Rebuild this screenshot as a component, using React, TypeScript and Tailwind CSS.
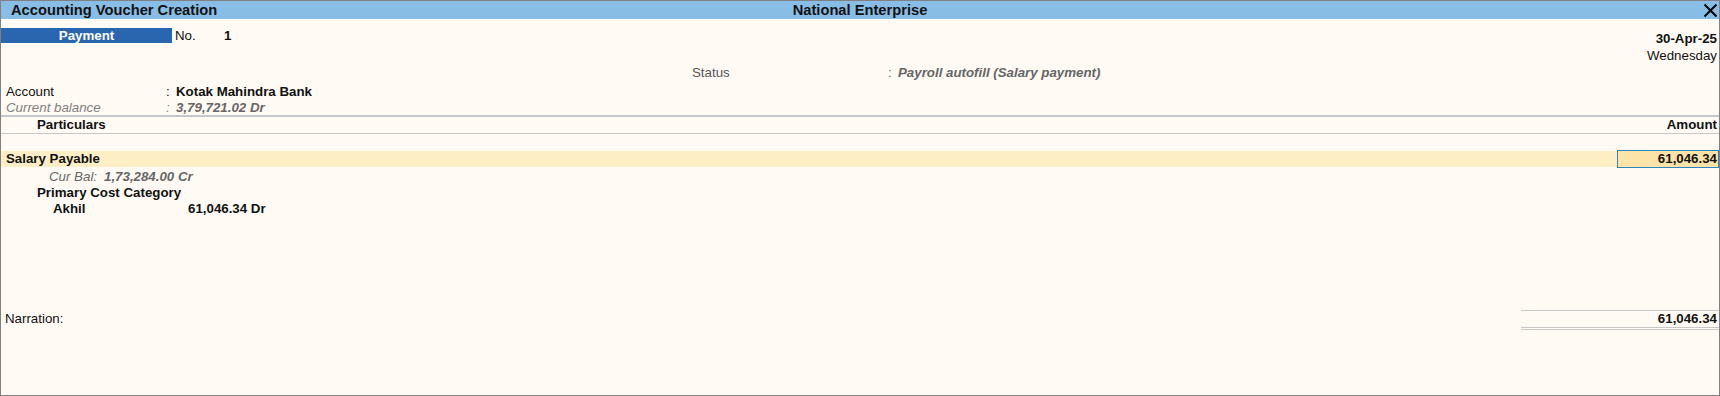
import React from 'react';

const font = { fontFamily: '"Liberation Sans", Arial, sans-serif' };

const App: React.FC = () => {
  return (
    <div
      className="w-[1720px] h-[396px] bg-[#fffaf3] border border-[#808080] flex flex-col text-[13.3px] text-[#111]"
      style={font}
    >
      {/* Title bar */}
      <div className="h-[18px] bg-[#88bde6] grid grid-cols-[1fr_auto_1fr] items-center font-bold text-[14.7px] leading-[18px]">
        <div className="pl-[10px]">Accounting Voucher Creation</div>
        <div>National Enterprise</div>
        <div className="flex justify-end pr-[1px]">
          <svg width="15" height="15" viewBox="0 0 15 15" className="block">
            <path d="M1.5 1.5 L13.5 13.5 M13.5 1.5 L1.5 13.5" stroke="#000" strokeWidth="2" />
          </svg>
        </div>
      </div>

      {/* Voucher type, number and date */}
      <div className="flex mt-[9px]">
        <div className="flex h-[15px] items-center">
          <div className="w-[171px] h-[15px] bg-[#2a66b0] text-white font-bold text-center leading-[15px]">
            Payment
          </div>
          <div className="w-[52px] pl-[3px]">No.</div>
          <div className="font-bold">1</div>
        </div>
        <div className="ml-auto mt-[2px] pr-[2px] flex flex-col items-end leading-[17px]">
          <div className="font-bold">30-Apr-25</div>
          <div>Wednesday</div>
        </div>
      </div>

      {/* Status */}
      <div className="flex h-[17px] items-center">
        <div className="w-[691px]" />
        <div className="w-[196px] text-[#555]">Status</div>
        <div className="w-[10px] text-[#777]">:</div>
        <div className="font-bold italic text-[#666]">Payroll autofill (Salary payment)</div>
      </div>

      {/* Account */}
      <div className="mt-[3px] flex h-[16px] items-center pl-[5px]">
        <div className="w-[160px]">Account</div>
        <div className="w-[10px]">:</div>
        <div className="font-bold">Kotak Mahindra Bank</div>
      </div>
      <div className="flex h-[15px] items-center pl-[5px] italic text-[#808080]">
        <div className="w-[160px]">Current balance</div>
        <div className="w-[10px]">:</div>
        <div className="font-bold text-[#666]">3,79,721.02 Dr</div>
      </div>

      {/* Column headers */}
      <div className="border-t-2 border-b border-[#c8c8c8] flex h-[19px] items-center font-bold">
        <div className="pl-[36px]">Particulars</div>
        <div className="ml-auto pr-[2px]">Amount</div>
      </div>

      {/* Entries */}
      <div className="mt-[17px] h-[16px] bg-[#fdeec6] flex items-center">
        <div className="pl-[5px] font-bold">Salary Payable</div>
        <div className="ml-auto w-[102px] h-[18px] bg-[#fde3a8] border border-[#2a86c0] text-right pr-[1px] font-bold leading-[16px]">
          61,046.34
        </div>
      </div>
      <div className="mt-[2px] flex h-[16px] items-center pl-[48px] italic text-[#666]">
        <div className="w-[55px]">Cur Bal:</div>
        <div className="font-bold">1,73,284.00 Cr</div>
      </div>
      <div className="flex h-[16px] items-center pl-[36px] font-bold">Primary Cost Category</div>
      <div className="flex h-[16px] items-center pl-[52px] font-bold">
        <div className="w-[135px]">Akhil</div>
        <div>61,046.34 Dr</div>
      </div>

      {/* Narration and total */}
      <div className="mt-auto mb-[65px] flex items-end">
        <div className="pl-[4px] h-[17px] leading-[17px] mb-[3px]">Narration:</div>
        <div className="ml-auto w-[198px] border-t border-b-[3px] border-double border-[#c8c8c8] h-[20px] text-right pr-[2px] font-bold leading-[16px]">
          61,046.34
        </div>
      </div>
    </div>
  );
};

export default App;
